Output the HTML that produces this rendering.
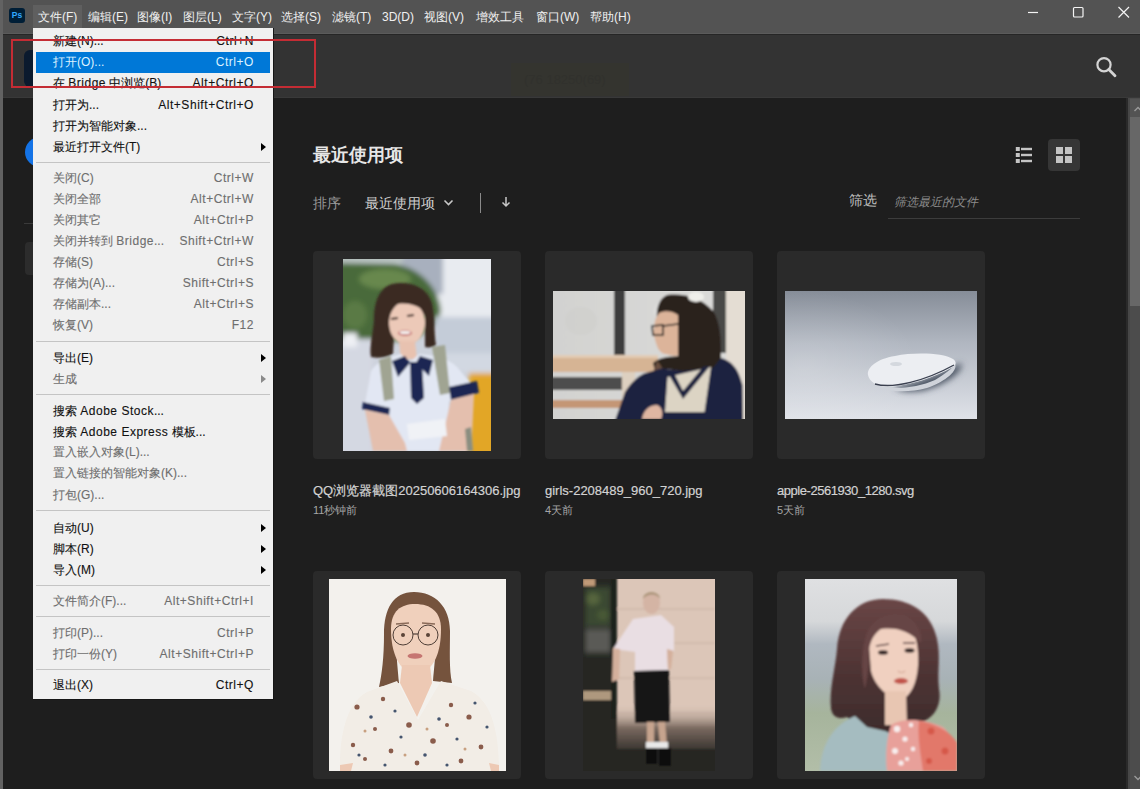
<!DOCTYPE html>
<html><head><meta charset="utf-8">
<style>
*{margin:0;padding:0;box-sizing:border-box}
html,body{width:1140px;height:789px;overflow:hidden;background:#1e1e1e;font-family:"Liberation Sans",sans-serif;position:relative}
.a{position:absolute}
#strip{left:0;top:0;width:3px;height:789px;background:#626262}
#title{left:3px;top:0;width:1137px;height:33px;background:#535353}
#tline{left:3px;top:33px;width:1137px;height:1px;background:#5b5b5b}
#tline2{left:3px;top:34px;width:1137px;height:1px;background:#262626}
#hdr{left:3px;top:35px;width:1137px;height:63px;background:#333333}
#hline{left:3px;top:97px;width:1137px;height:1px;background:#393939}
#main{left:3px;top:98px;width:1125px;height:691px;background:#1e1e1e}
#sb{left:1128px;top:98px;width:12px;height:691px;background:#4c4c4c;border-left:2px solid #474747}
#sbl{left:1126px;top:98px;width:2px;height:691px;background:#2a2a2a}
#sbu{left:1130px;top:99px;width:10px;height:18px;background:#535353}
#thumb{left:1130px;top:117px;width:10px;height:189px;background:#676767}
.tm{position:absolute;top:9px;font-size:12px;line-height:16px;color:#f0f0f0;white-space:nowrap}
#fbtn{left:33px;top:5px;width:49px;height:23px;background:#5f5f5f}
#menu{left:33px;top:28px;width:241px;height:672px;background:#f0f0f0;border-right:1px solid #161616;border-bottom:1px solid #161616}
.row{position:absolute;left:33px;width:240px;height:21px;font-size:12px;line-height:21px;color:#111;white-space:nowrap;-webkit-text-stroke:0.12px currentColor}
.row .l{position:absolute;left:20px}
.row .r{position:absolute;right:19px;letter-spacing:0.55px}
.row.d{color:#6e6e6e}
.row.h{background:#0078d7;color:#dcf2ff;left:36px;width:234px;-webkit-text-stroke:0}
.row.h .l{left:17px}.row.h .r{right:16px;color:#dcf2ff}
.arr{position:absolute;left:228px;top:6px;width:0;height:0;border-left:5.5px solid #000;border-top:4.75px solid transparent;border-bottom:4.75px solid transparent}
.row.d .arr{border-left-color:#8a8a8a}
.sep{position:absolute;left:36px;width:234px;height:1px;background:#c4c4c4}
.lat{letter-spacing:0.5px}
#redbox{left:11px;top:38.8px;width:305px;height:49.2px;border:2.2px solid #c42c34}
.t{position:absolute;white-space:nowrap}
.card{position:absolute;width:208px;height:208px;background:#2a2a2a;border-radius:4px;overflow:hidden}
.img{position:absolute;overflow:hidden}
.fn{position:absolute;font-size:13px;color:#d2d2d2;white-space:nowrap;line-height:16px;-webkit-text-stroke:0.2px currentColor}
.ft{position:absolute;font-size:11px;color:#a6a6a6;white-space:nowrap;line-height:14px}
</style></head><body>
<div id="strip" class="a"></div>
<div id="title" class="a"></div>
<div id="tline" class="a"></div><div id="tline2" class="a"></div>
<div id="hdr" class="a"></div><div id="hline" class="a"></div>
<div id="main" class="a"></div>
<div id="sb" class="a"></div>
<div id="sbl" class="a"></div><div id="sbu" class="a"></div><div id="thumb" class="a"></div>
<svg class="a" style="left:1128px;top:98px" width="12" height="20"><path d="M6.5 13 L10 9.5 L13.5 13" fill="none" stroke="#9a9a9a" stroke-width="1.4"/></svg>
<svg class="a" style="left:1128px;top:768px" width="12" height="20"><path d="M6.5 8 L10 11.5 L13.5 8" fill="none" stroke="#9a9a9a" stroke-width="1.4"/></svg>

<!-- title bar -->
<div class="a" style="left:9px;top:8px;width:16px;height:15px;background:#001e36;border-radius:3px"></div>
<div class="a" style="left:9px;top:8px;width:16px;height:15px;color:#31a8ff;font-size:8.5px;font-weight:bold;line-height:15px;text-align:center">Ps</div>
<div id="fbtn" class="a"></div>
<div class="tm" style="left:38px">文件(F)</div>
<div class="tm" style="left:88px">编辑(E)</div>
<div class="tm" style="left:137px">图像(I)</div>
<div class="tm" style="left:183px">图层(L)</div>
<div class="tm" style="left:232px">文字(Y)</div>
<div class="tm" style="left:281px">选择(S)</div>
<div class="tm" style="left:332px">滤镜(T)</div>
<div class="tm" style="left:382px">3D(D)</div>
<div class="tm" style="left:424px">视图(V)</div>
<div class="tm" style="left:476px">增效工具</div>
<div class="tm" style="left:536px">窗口(W)</div>
<div class="tm" style="left:590px">帮助(H)</div>
<svg class="a" style="left:1020px;top:0" width="120" height="34">
<line x1="8" y1="12.5" x2="18" y2="12.5" stroke="#f4f4f4" stroke-width="1.2"/>
<rect x="53.5" y="7.5" width="9.5" height="9.5" rx="1" fill="none" stroke="#f4f4f4" stroke-width="1.2"/>
<path d="M98.5 7 L109 17.5 M109 7 L98.5 17.5" stroke="#f4f4f4" stroke-width="1.2"/>
</svg>

<!-- header -->
<div class="a" style="left:511px;top:63px;width:118px;height:33px;background:#34342f"></div>
<div class="t" style="left:524px;top:72px;font-size:13px;line-height:15px;color:#31312d">(76 18250(69)</div>
<svg class="a" style="left:1090px;top:52px" width="32" height="32">
<circle cx="14" cy="12.7" r="6.6" fill="none" stroke="#d4d4d4" stroke-width="2.2"/>
<line x1="18.8" y1="17.5" x2="25" y2="23.8" stroke="#d4d4d4" stroke-width="2.8" stroke-linecap="round"/>
</svg>

<!-- sidebar peeks -->
<div class="a" style="left:24px;top:50px;width:20px;height:37px;background:#0b1a2e;border-radius:6px"></div>
<div class="a" style="left:24.5px;top:137px;width:30px;height:30px;background:#1473e6;border-radius:50%"></div>
<div class="a" style="left:24px;top:223px;width:12px;height:1px;background:#3a3a3a"></div>
<div class="a" style="left:25px;top:242px;width:14px;height:33px;background:#2c2c2c;border-radius:4px"></div>

<!-- main content header -->
<div class="t" style="left:313px;top:145px;font-size:18px;font-weight:bold;color:#e6e6e6;line-height:20px">最近使用项</div>
<div class="t" style="left:313px;top:195px;font-size:14px;color:#9a9a9a;line-height:16px">排序</div>
<div class="t" style="left:365px;top:195px;font-size:14px;color:#d0d0d0;line-height:16px">最近使用项</div>
<svg class="a" style="left:440px;top:195px" width="20" height="16"><path d="M4.5 5.5 L8.5 9.5 L12.5 5.5" fill="none" stroke="#c8c8c8" stroke-width="1.6"/></svg>
<div class="a" style="left:480px;top:193px;width:1px;height:20px;background:#8a8a8a"></div>
<svg class="a" style="left:498px;top:193px" width="16" height="18"><path d="M8 4 V13 M4.5 9.5 L8 13 L11.5 9.5" fill="none" stroke="#c8c8c8" stroke-width="1.5"/></svg>
<div class="t" style="left:849px;top:192px;font-size:14px;color:#c0c0c0;line-height:16px">筛选</div>
<div class="t" style="left:894px;top:195px;font-size:12px;color:#8c8c8c;font-style:italic;line-height:14px">筛选最近的文件</div>
<div class="a" style="left:888px;top:218px;width:192px;height:1px;background:#3c3c3c"></div>
<svg class="a" style="left:1010px;top:142px" width="26" height="26">
<rect x="5.8" y="5" width="4" height="4" fill="#c4c4c4"/><rect x="11" y="5.8" width="11" height="2.4" fill="#c4c4c4"/>
<rect x="5.8" y="11" width="4" height="4" fill="#c4c4c4"/><rect x="11" y="11.8" width="11" height="2.4" fill="#c4c4c4"/>
<rect x="5.8" y="17" width="4" height="4" fill="#c4c4c4"/><rect x="11" y="17.8" width="11" height="2.4" fill="#c4c4c4"/>
</svg>
<div class="a" style="left:1048px;top:139px;width:32px;height:32px;background:#363636;border-radius:4px"></div>
<svg class="a" style="left:1048px;top:139px" width="32" height="32">
<rect x="8" y="8" width="7" height="7" fill="#c4c4c4"/><rect x="17" y="8" width="7" height="7" fill="#c4c4c4"/>
<rect x="8" y="17" width="7" height="7" fill="#c4c4c4"/><rect x="17" y="17" width="7" height="7" fill="#c4c4c4"/>
</svg>

<!-- cards -->
<div class="card" style="left:313px;top:251px"></div>
<div class="card" style="left:545px;top:251px"></div>
<div class="card" style="left:777px;top:251px"></div>
<div class="card" style="left:313px;top:571px"></div>
<div class="card" style="left:545px;top:571px"></div>
<div class="card" style="left:777px;top:571px"></div>

<div class="img" id="im1" style="left:343px;top:259px;width:148px;height:192px"><svg width="148" height="192" viewBox="0 0 148 192">
<defs><filter id="b1" x="-30%" y="-30%" width="160%" height="160%"><feGaussianBlur stdDeviation="2.5"/></filter>
<filter id="s1" x="-10%" y="-10%" width="120%" height="120%"><feGaussianBlur stdDeviation="0.8"/></filter></defs>
<rect width="148" height="192" fill="#cdd2dc"/>
<g filter="url(#b1)">
<rect x="95" y="-10" width="65" height="75" fill="#e8ebf0"/>
<rect x="58" y="-10" width="42" height="45" fill="#a8b0be"/>
<rect x="-10" y="-10" width="70" height="14" fill="#b8c2c0"/><path d="M-10 4 L50 5 C78 8 96 30 98 52 C94 68 80 78 60 82 L-10 82 Z" fill="#4a6a3a"/><ellipse cx="42" cy="20" rx="26" ry="10" fill="#68884e"/><ellipse cx="12" cy="56" rx="12" ry="14" fill="#5a7a44"/>
<rect x="-10" y="80" width="40" height="120" fill="#d4d8e2"/>
<rect x="0" y="74" width="14" height="14" fill="#eef0f4"/>
<rect x="92" y="58" width="66" height="36" fill="#c4ccd8"/>
<rect x="92" y="94" width="66" height="20" fill="#d2d8e2"/>
<rect x="126" y="114" width="30" height="86" fill="#e2a626"/>
</g>
<g filter="url(#s1)">
<path d="M57 24 C38 24 31 40 31 60 C30 76 26 88 28 98 C36 100 44 98 50 95 L52 60 L82 56 L82 88 C86 89 90 88 93 86 C91 74 92 58 89 44 C85 31 74 24 57 24 Z" fill="#3b2a22"/>
<ellipse cx="64" cy="64" rx="18" ry="22" fill="#ecc9b8"/>
<path d="M43 52 C44 34 55 29 65 29 C78 30 85 40 85 56 C78 46 62 42 50 46 Z" fill="#3b2a22"/>
<path d="M56 82 L72 82 L74 100 L58 100 Z" fill="#e8c2b0"/><path d="M48 60 L55 59 M64 57 L71 56" stroke="#3a2a24" stroke-width="1.8"/><ellipse cx="62" cy="74" rx="7" ry="3" fill="#c46a6a"/><ellipse cx="62" cy="73.5" rx="5.5" ry="1.8" fill="#f4f0ee"/>
<path d="M21 150 L28 112 C35 101 48 97 58 95 L66 104 L76 95 C88 96 104 98 114 108 L136 134 L106 142 L104 192 L46 192 L47 155 Z" fill="#e2e7f3"/>
<path d="M36 101 L48 97 L51 140 L41 142 Z" fill="#a0a492"/>
<path d="M89 88 L102 86 L107 134 L97 136 Z" fill="#a0a492"/>
<path d="M49 102 L62 97 L67 104 L55 118 Z M77 97 L90 101 L86 117 L73 104 Z" fill="#1b2852"/>
<path d="M67 103 L79 103 L81 139 L74 145 L68 139 Z" fill="#1b2852"/>
<path d="M20 143 L47 149 L46 156 L19 150 Z" fill="#1b2852"/>
<path d="M106 128 L134 122 L136 134 L108 141 Z" fill="#1b2852"/>
<path d="M22 151 L46 156 L62 184 L64 192 L30 192 Z" fill="#e4bfae"/>
<path d="M108 141 L131 135 L128 192 L96 192 Z" fill="#e4bfae"/>
<path d="M122 170 L128 168 L130 192 L124 192 Z" fill="#8a8e80"/>
<path d="M64 165 L102 160 L104 177 L66 181 Z" fill="#f0f2f6"/>
</g>
</svg></div>
<div class="img" id="im2" style="left:553px;top:291px;width:192px;height:128px"><svg width="192" height="128" viewBox="0 0 192 128">
<defs><filter id="s2" x="-10%" y="-10%" width="120%" height="120%"><feGaussianBlur stdDeviation="0.8"/></filter>
<linearGradient id="g2" x1="0" y1="0" x2="1" y2="0"><stop offset="0" stop-color="#d2d2d0"/><stop offset="1" stop-color="#dcdcda"/></linearGradient></defs>
<g filter="url(#s2)">
<rect x="-5" y="-5" width="202" height="138" fill="url(#g2)"/>
<ellipse cx="28" cy="30" rx="16" ry="14" fill="#cacac8" opacity="0.35"/><ellipse cx="120" cy="20" rx="20" ry="12" fill="#e0e0de" opacity="0.6"/><rect x="61" y="-5" width="11" height="71" fill="#3c3c3c"/>
<rect x="160" y="-5" width="13" height="67" fill="#4a4846"/>
<rect x="173" y="-5" width="24" height="138" fill="#e4ddd3"/>
<rect x="-5" y="64" width="110" height="17" fill="#d6b494"/>
<rect x="-5" y="64" width="110" height="3" fill="#e2cbb4"/>
<rect x="-5" y="86" width="75" height="13" fill="#4e4e4e"/>
<rect x="-5" y="109" width="75" height="8" fill="#c49674"/>
<rect x="69" y="81" width="13" height="50" fill="#ddd0c0"/>
<path d="M114 4 C130 2 148 6 160 20 C168 32 168 50 168 66 C167 74 165 80 160 83 L130 81 C120 79 110 76 102 80 L100 72 C106 67 112 66 125 65 L125 26 C118 22 110 22 104 28 C103 16 107 7 114 4 Z" fill="#2a221e"/>
<path d="M104 70 C108 74 112 80 110 86 L100 82 Z" fill="#6a5040"/><path d="M106 22 C103 26 101 31 101 37 L99.5 44 L101.5 46.5 C102 50 103.5 53 104 55 C105 58 107 61 110 62.5 C116 64 121 65 125 64.5 L125 24 C120 20 112 19 106 22 Z" fill="#dcb49a"/>
<path d="M99 35 L110 34 L110 44 L100 44 Z" fill="none" stroke="#1a1a1a" stroke-width="1.6"/>
<path d="M110 35 L125 33" stroke="#1a1a1a" stroke-width="1.4"/>
<path d="M61.5 131 L72 101 C78 92 84 86 91 82.5 L108 77.5 L130 80 L160 77 L168 67 C178 70 185 76 189.5 94 L190 131 Z" fill="#1e2440"/>
<path d="M114.5 86 L158 76 L151.5 121 L112 121 Z" fill="#dcd4c4"/>
<path d="M116 84 L130 108 L157 75 L150 76 L130 100 L122 84 Z" fill="#1e2440"/>
<path d="M89 128 C90 120 96 114 104 114 C110 116 110 124 108 128 Z" fill="#dfb6a2"/>
<ellipse cx="143" cy="6" rx="8" ry="5" fill="#efefea"/>
</g>
</svg></div>
<div class="img" id="im3" style="left:785px;top:291px;width:192px;height:128px"><svg width="192" height="128" viewBox="0 0 192 128">
<defs><linearGradient id="g3" x1="0" y1="0" x2="0" y2="1"><stop offset="0" stop-color="#868d98"/><stop offset="0.4" stop-color="#b0b6c0"/><stop offset="1" stop-color="#dfe2e8"/></linearGradient>
<radialGradient id="r3" cx="0.1" cy="0.6" r="0.6"><stop offset="0" stop-color="#ffffff" stop-opacity="0.18"/><stop offset="1" stop-color="#ffffff" stop-opacity="0"/></radialGradient>
<filter id="b3" x="-30%" y="-30%" width="160%" height="160%"><feGaussianBlur stdDeviation="3"/></filter>
<filter id="s3" x="-10%" y="-10%" width="120%" height="120%"><feGaussianBlur stdDeviation="0.6"/></filter></defs>
<rect width="192" height="128" fill="url(#g3)"/>
<rect width="192" height="128" fill="url(#r3)"/>
<path d="M110 96 C135 92 160 80 176 72 C180 78 165 92 140 99 C125 102 112 100 110 96 Z" fill="#4a5262" filter="url(#b3)"/>
<g filter="url(#s3)">
<path d="M88 92 C100 100 130 98 150 89 C160 83 168 77 170 73 C173 79 162 90 142 97 C122 102 100 102 88 92 Z" fill="#cfd3da"/>
<path d="M83 84 C82 76 92 68 110 65 C130 61 158 62 168 68 C172 71 171 74 168 76 C150 86 125 95 102 96 C92 96 84 90 83 84 Z" fill="#eceef2"/>
<path d="M90 93 C108 98 140 90 169 74" fill="none" stroke="#3a4050" stroke-width="1.4"/>
<ellipse cx="111" cy="73" rx="6" ry="2" fill="#d4d8de"/>
</g>
</svg></div>
<div class="img" id="im4" style="left:329px;top:579px;width:177px;height:192px"><svg width="177" height="192" viewBox="0 0 177 192">
<defs><filter id="s4" x="-10%" y="-10%" width="120%" height="120%"><feGaussianBlur stdDeviation="0.7"/></filter></defs>
<rect width="177" height="192" fill="#f3f1ed"/>
<g filter="url(#s4)">
<path d="M85 13 C64 13 55 30 55 55 C55 78 53 95 50 108 L70 104 C68 80 64 50 72 35 C80 27 94 27 102 35 C110 50 106 80 104 102 L123 104 C120 90 121 72 121 52 C121 28 106 13 85 13 Z" fill="#74523e"/>
<path d="M62 50 C62 32 72 25 86 25 C102 25 112 33 112 50 C112 72 106 92 87 96 C70 93 62 74 62 50 Z" fill="#f0d0bc"/>
<path d="M73 86 L101 86 L103 104 L88 138 L71 104 Z" fill="#edc9b4"/>
<path d="M11 186 C11 160 16 125 38 113 L68 102 L89 141 L112 102 L142 112 C164 124 169 155 170 186 L170 192 L11 192 Z" fill="#f2ede6"/>
<path d="M11 186 L11 192 L22 192 L24 184 Z M160 184 L170 186 L170 192 L162 192 Z" fill="#edc9b4"/>
<circle cx="74" cy="56" r="10" fill="none" stroke="#4e3e36" stroke-width="1.0"/>
<circle cx="99" cy="56" r="10" fill="none" stroke="#4e3e36" stroke-width="1.0"/>
<path d="M84 55 L89 55" stroke="#4e3e36" stroke-width="1.2"/>
<path d="M67 45 L80 44 M93 44 L106 45" stroke="#8a6a58" stroke-width="1.4"/>
<circle cx="74" cy="56" r="2" fill="#5a4438"/><circle cx="99" cy="56" r="2" fill="#5a4438"/>
<ellipse cx="86" cy="77" rx="7.5" ry="2.8" fill="#c67672"/>
<g fill="#8a5c4c"><circle cx="28" cy="128" r="2.6"/><circle cx="54" cy="120" r="2.2"/><circle cx="80" cy="146" r="2.8"/><circle cx="122" cy="126" r="2.2"/><circle cx="140" cy="138" r="2.6"/><circle cx="104" cy="162" r="2.8"/><circle cx="62" cy="172" r="2.4"/><circle cx="152" cy="168" r="2.4"/><circle cx="24" cy="166" r="2.2"/><circle cx="132" cy="182" r="2.4"/><circle cx="46" cy="150" r="2"/><circle cx="88" cy="184" r="2.4"/><circle cx="118" cy="146" r="2"/><circle cx="36" cy="180" r="2"/></g>
<g fill="#44546e"><circle cx="42" cy="138" r="1.8"/><circle cx="66" cy="132" r="1.6"/><circle cx="110" cy="140" r="1.8"/><circle cx="158" cy="148" r="1.6"/><circle cx="96" cy="176" r="1.8"/><circle cx="30" cy="176" r="1.6"/><circle cx="128" cy="160" r="1.6"/><circle cx="72" cy="158" r="1.6"/><circle cx="146" cy="124" r="1.6"/><circle cx="56" cy="186" r="1.6"/><circle cx="118" cy="186" r="1.6"/></g>
<g fill="#c8a080"><circle cx="36" cy="152" r="1.5"/><circle cx="98" cy="150" r="1.5"/><circle cx="136" cy="170" r="1.5"/><circle cx="76" cy="176" r="1.5"/></g>
</g>
</svg></div>
<div class="img" id="im5" style="left:583px;top:579px;width:132px;height:192px"><svg width="132" height="192" viewBox="0 0 132 192">
<defs><linearGradient id="g5" x1="0" y1="0" x2="0" y2="1"><stop offset="0" stop-color="#d8c4b6" stop-opacity="0"/><stop offset="0.5" stop-color="#7a6a60"/><stop offset="1" stop-color="#34302c"/></linearGradient>
<filter id="s5" x="-10%" y="-10%" width="120%" height="120%"><feGaussianBlur stdDeviation="0.8"/></filter>
<filter id="b5" x="-30%" y="-30%" width="160%" height="160%"><feGaussianBlur stdDeviation="2.5"/></filter></defs>
<rect x="0" y="0" width="132" height="192" fill="#dcc6b8"/>
<g filter="url(#s5)">
<path d="M34 30 H132 M34 64 H132 M34 99 H132 M34 134 H132" stroke="#c8b0a2" stroke-width="1"/>
<rect x="34" y="125" width="100" height="48" fill="url(#g5)"/>
<rect x="-5" y="-5" width="39" height="202" fill="#262824"/>
<g filter="url(#b5)">
<rect x="2" y="8" width="26" height="40" fill="#3a4830"/>
<rect x="2" y="50" width="26" height="24" fill="#5a5a56"/><ellipse cx="10" cy="20" rx="7" ry="6" fill="#56663e"/><ellipse cx="20" cy="36" rx="6" ry="5" fill="#4a5a36"/>
</g>
<rect x="0" y="0" width="12" height="7" fill="#c09a78"/>
<rect x="0" y="112" width="30" height="9" fill="#ae987e"/>
<rect x="28" y="0" width="6" height="140" fill="#1e201c"/>
<rect x="-5" y="170" width="142" height="30" fill="#262624"/>
<ellipse cx="68.5" cy="24" rx="8.5" ry="11" fill="#d4b4a4"/>
<path d="M60 20 C60 11 77 11 77 20 C74 14 64 14 60 20 Z" fill="#a89276"/>
<path d="M50 40 L78 36 L91 48 L91 72 L84 70 L85 92 L52 94 L52 73 L30 70 Z" fill="#e9dee3"/>
<path d="M30 69 L37 70 L36 100 L29 103 Z" fill="#d4b09c"/>
<path d="M84 70 L90 72 L88 90 L85 90 Z" fill="#d4b09c"/>
<path d="M51 92 L86 91 L87 143 L52 144 Z" fill="#141414"/>
<path d="M64 143 L71 143 L71 166 L64 166 Z M75 143 L82 143 L84 166 L77 166 Z" fill="#c6a48e"/>
<rect x="63" y="163" width="22" height="6" fill="#e8e8e8"/>
<path d="M63 169 H74 V185 H63 Z M76 169 H88 V187 H76 Z" fill="#0e0e0e"/>
</g>
</svg></div>
<div class="img" id="im6" style="left:805px;top:579px;width:152px;height:192px"><svg width="152" height="192" viewBox="0 0 152 192">
<defs><linearGradient id="g6" x1="0" y1="0" x2="0" y2="1"><stop offset="0" stop-color="#dfe0e2"/><stop offset="0.22" stop-color="#d6d8da"/><stop offset="0.34" stop-color="#b0b8c0"/><stop offset="0.52" stop-color="#a8b2b6"/><stop offset="0.7" stop-color="#a6b49c"/><stop offset="1" stop-color="#b2bea8"/></linearGradient>
<filter id="s6" x="-10%" y="-10%" width="120%" height="120%"><feGaussianBlur stdDeviation="0.9"/></filter><linearGradient id="h6" x1="0" y1="0" x2="0" y2="1"><stop offset="0" stop-color="#6a4646"/><stop offset="0.5" stop-color="#4e3434"/><stop offset="1" stop-color="#3a2a2a"/></linearGradient></defs>
<rect width="152" height="192" fill="url(#g6)"/>
<g filter="url(#s6)">
<path d="M78 20 C52 20 34 40 32 70 C30 92 24 110 26 130 C28 140 36 140 42 138 C56 150 70 166 90 166 C100 160 104 150 106 144 C124 146 138 130 134 110 C132 90 136 80 132 60 C126 32 104 20 78 20 Z" fill="url(#h6)"/>
<path d="M64 66 C64 48 76 40 94 42 C110 46 114 64 113 86 C112 104 106 116 97 121 C84 120 70 108 66 92 Z" fill="#f0d0c0"/>
<path d="M60 60 C64 40 82 32 100 36 C112 42 118 54 116 64 C104 52 92 48 76 50 C70 54 66 60 64 70 C64 90 62 100 60 110 C56 96 56 76 60 60 Z" fill="#664444"/>
<path d="M80 112 L101 112 L102 146 L80 146 Z" fill="#e8c6b2"/>
<ellipse cx="78" cy="73.5" rx="5" ry="2.2" fill="#2e2020"/><ellipse cx="104.5" cy="71.5" rx="5" ry="2.2" fill="#2e2020"/><path d="M71 67 L84 65 M98 64 L110 64" stroke="#5a4040" stroke-width="1.4"/>
<ellipse cx="96" cy="102" rx="7" ry="3" fill="#c2544c"/><path d="M93 92 C95 94 98 94 100 92" fill="none" stroke="#d4a898" stroke-width="1.2"/>
<path d="M15 192 C16 166 28 146 50 137 L62 148 L80 152 L98 160 L100 192 Z" fill="#a5bcc0"/>
<path d="M86 146 C98 138 120 140 138 148 C150 158 152 175 152 192 L82 192 C80 176 82 158 86 146 Z" fill="#e8a09a"/>
<path d="M114 142 C128 144 146 152 152 164 L152 192 L118 192 C116 176 112 160 114 142 Z" fill="#e2786a"/>
<g fill="#f8eeee"><circle cx="92" cy="150" r="3.2"/><circle cx="100" cy="160" r="2.6"/><circle cx="90" cy="172" r="3"/><circle cx="106" cy="146" r="2.2"/><circle cx="96" cy="184" r="2.6"/><circle cx="108" cy="170" r="2.2"/><circle cx="102" cy="180" r="2"/></g>
<g fill="#d65848"><circle cx="126" cy="152" r="3.5"/><circle cx="140" cy="172" r="3.5"/><circle cx="124" cy="182" r="3"/></g>
</g>
</svg></div>

<div class="fn" style="left:313px;top:483px">QQ浏览器截图20250606164306.jpg</div>
<div class="ft" style="left:313px;top:503px">11秒钟前</div>
<div class="fn" style="left:545px;top:483px">girls-2208489_960_720.jpg</div>
<div class="ft" style="left:545px;top:503px">4天前</div>
<div class="fn" style="left:777px;top:483px;letter-spacing:-0.45px">apple-2561930_1280.svg</div>
<div class="ft" style="left:777px;top:503px">5天前</div>

<!-- MENU -->
<div id="menu" class="a"></div>
<div class="row" style="top:30.5px"><span class="l">新建(N)...</span><span class="r">Ctrl+N</span></div>
<div class="row h" style="top:52px"><span class="l">打开(O)...</span><span class="r">Ctrl+O</span></div>
<div class="row" style="top:73px"><span class="l">在 <span class="lat">Bridge</span> 中浏览(B)</span><span class="r">Alt+Ctrl+O</span></div>
<div class="row" style="top:95px"><span class="l">打开为...</span><span class="r">Alt+Shift+Ctrl+O</span></div>
<div class="row" style="top:116px"><span class="l">打开为智能对象...</span></div>
<div class="row" style="top:137px"><span class="l">最近打开文件(T)</span><i class="arr"></i></div>
<div class="sep" style="top:162px"></div>
<div class="row d" style="top:168px"><span class="l">关闭(C)</span><span class="r">Ctrl+W</span></div>
<div class="row d" style="top:189px"><span class="l">关闭全部</span><span class="r">Alt+Ctrl+W</span></div>
<div class="row d" style="top:210px"><span class="l">关闭其它</span><span class="r">Alt+Ctrl+P</span></div>
<div class="row d" style="top:231px"><span class="l">关闭并转到 <span class="lat">Bridge</span>...</span><span class="r">Shift+Ctrl+W</span></div>
<div class="row d" style="top:252px"><span class="l">存储(S)</span><span class="r">Ctrl+S</span></div>
<div class="row d" style="top:273px"><span class="l">存储为(A)...</span><span class="r">Shift+Ctrl+S</span></div>
<div class="row d" style="top:294px"><span class="l">存储副本...</span><span class="r">Alt+Ctrl+S</span></div>
<div class="row d" style="top:315px"><span class="l">恢复(V)</span><span class="r">F12</span></div>
<div class="sep" style="top:341px"></div>
<div class="row" style="top:348px"><span class="l">导出(E)</span><i class="arr"></i></div>
<div class="row d" style="top:369px"><span class="l">生成</span><i class="arr"></i></div>
<div class="sep" style="top:394px"></div>
<div class="row" style="top:401px"><span class="l">搜索 <span class="lat">Adobe Stock</span>...</span></div>
<div class="row" style="top:422px"><span class="l">搜索 <span class="lat">Adobe Express</span> 模板...</span></div>
<div class="row d" style="top:442px"><span class="l">置入嵌入对象(L)...</span></div>
<div class="row d" style="top:463px"><span class="l">置入链接的智能对象(K)...</span></div>
<div class="row d" style="top:484.5px"><span class="l">打包(G)...</span></div>
<div class="sep" style="top:510px"></div>
<div class="row" style="top:518px"><span class="l">自动(U)</span><i class="arr"></i></div>
<div class="row" style="top:539px"><span class="l">脚本(R)</span><i class="arr"></i></div>
<div class="row" style="top:559.5px"><span class="l">导入(M)</span><i class="arr"></i></div>
<div class="sep" style="top:584.5px"></div>
<div class="row d" style="top:590.5px"><span class="l">文件简介(F)...</span><span class="r">Alt+Shift+Ctrl+I</span></div>
<div class="sep" style="top:616px"></div>
<div class="row d" style="top:622.5px"><span class="l">打印(P)...</span><span class="r">Ctrl+P</span></div>
<div class="row d" style="top:643.5px"><span class="l">打印一份(Y)</span><span class="r">Alt+Shift+Ctrl+P</span></div>
<div class="sep" style="top:669px"></div>
<div class="row" style="top:675px"><span class="l">退出(X)</span><span class="r">Ctrl+Q</span></div>
<div id="redbox" class="a"></div>
</body></html>
